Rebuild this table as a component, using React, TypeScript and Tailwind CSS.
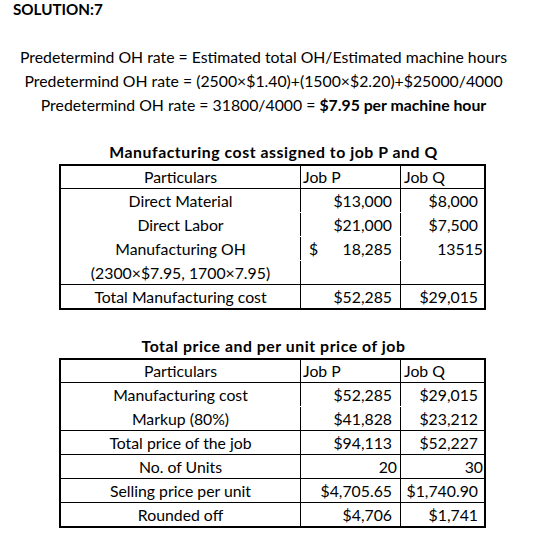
import React from "react";

const font = { fontFamily: "Lato, 'Liberation Sans', sans-serif" };

type Row = { c1: string; c2: React.ReactNode; c3: React.ReactNode; line: boolean; p2?: string; p3?: string; split?: boolean };

function Table({ rows }: { rows: Row[] }) {
  return (
    <div className="ml-[59px] w-[427px] border-2 border-black">
      <div className="flex h-[22px] leading-[22px]">
        <div className="w-[239px] text-center">Particulars</div>
        <div className="w-[100px] border-l border-black pl-[2px]">Job P</div>
        <div className="w-[84px] border-l border-black pl-[3px]">Job Q</div>
      </div>
      {rows.map((r, i) => (
        <div
          key={i}
          className={`flex h-[24px] leading-[24px] border-t ${r.line ? "border-black" : "border-transparent"}`}
        >
          <div className="w-[239px] text-center whitespace-nowrap">{r.c1}</div>
          <div
            className={`w-[100px] border-l border-black whitespace-nowrap ${
              r.split ? "flex justify-between pl-[8px] pr-[8px]" : `text-right ${r.p2 ?? "pr-[8px]"}`
            }`}
          >
            {r.c2}
          </div>
          <div className={`w-[84px] border-l border-black text-right whitespace-nowrap ${r.p3 ?? "pr-[6px]"}`}>
            {r.c3}
          </div>
        </div>
      ))}
    </div>
  );
}

export default function App() {
  const t1: Row[] = [
    { c1: "Direct Material", c2: "$13,000", c3: "$8,000", line: true },
    { c1: "Direct Labor", c2: "$21,000", c3: "$7,500", line: false },
    {
      c1: "Manufacturing OH",
      c2: (
        <>
          <span>$</span>
          <span>18,285</span>
        </>
      ),
      split: true,
      c3: "13515",
      p3: "pr-[1px]",
      line: false,
    },
    { c1: "(2300×$7.95, 1700×7.95)", c2: "", c3: "", line: false },
    { c1: "Total Manufacturing cost", c2: "$52,285", c3: "$29,015", line: true },
  ];
  const t2: Row[] = [
    { c1: "Manufacturing cost", c2: "$52,285", c3: "$29,015", line: true },
    { c1: "Markup (80%)", c2: "$41,828", c3: "$23,212", line: false },
    { c1: "Total price of the job", c2: "$94,113", c3: "$52,227", line: true },
    { c1: "No. of Units", c2: "20", c3: "30", p2: "pr-[3px]", p3: "pr-[1px]", line: true },
    { c1: "Selling price per unit", c2: "$4,705.65", c3: "$1,740.90", line: true },
    { c1: "Rounded off", c2: "$4,706", c3: "$1,741", line: true },
  ];
  return (
    <div className="w-[543px] h-[554px] bg-white text-black text-[15.8px]" style={font}>
      <div className="h-[19px] leading-[19px] pl-[13px] font-bold text-[15.2px]">SOLUTION:7</div>
      <div className="mt-[26px] w-[527px] text-center">
        <div className="h-[24px] leading-[24px]">Predetermind OH rate = Estimated total OH/Estimated machine hours</div>
        <div className="h-[24px] leading-[24px]">Predetermind OH rate = (2500×$1.40)+(1500×$2.20)+$25000/4000</div>
        <div className="h-[24px] leading-[24px]">
          Predetermind OH rate = 31800/4000 = <span className="font-bold">$7.95 per machine hour</span>
        </div>
      </div>
      <div className="mt-[23px] h-[24px] leading-[24px] font-bold tracking-[0.55px] w-[547px] text-center">
        Manufacturing cost assigned to job P and Q
      </div>
      <Table rows={t1} />
      <div className="mt-[24px] h-[24px] leading-[24px] font-bold tracking-[0.55px] w-[547px] text-center">
        Total price and per unit price of job
      </div>
      <Table rows={t2} />
    </div>
  );
}
